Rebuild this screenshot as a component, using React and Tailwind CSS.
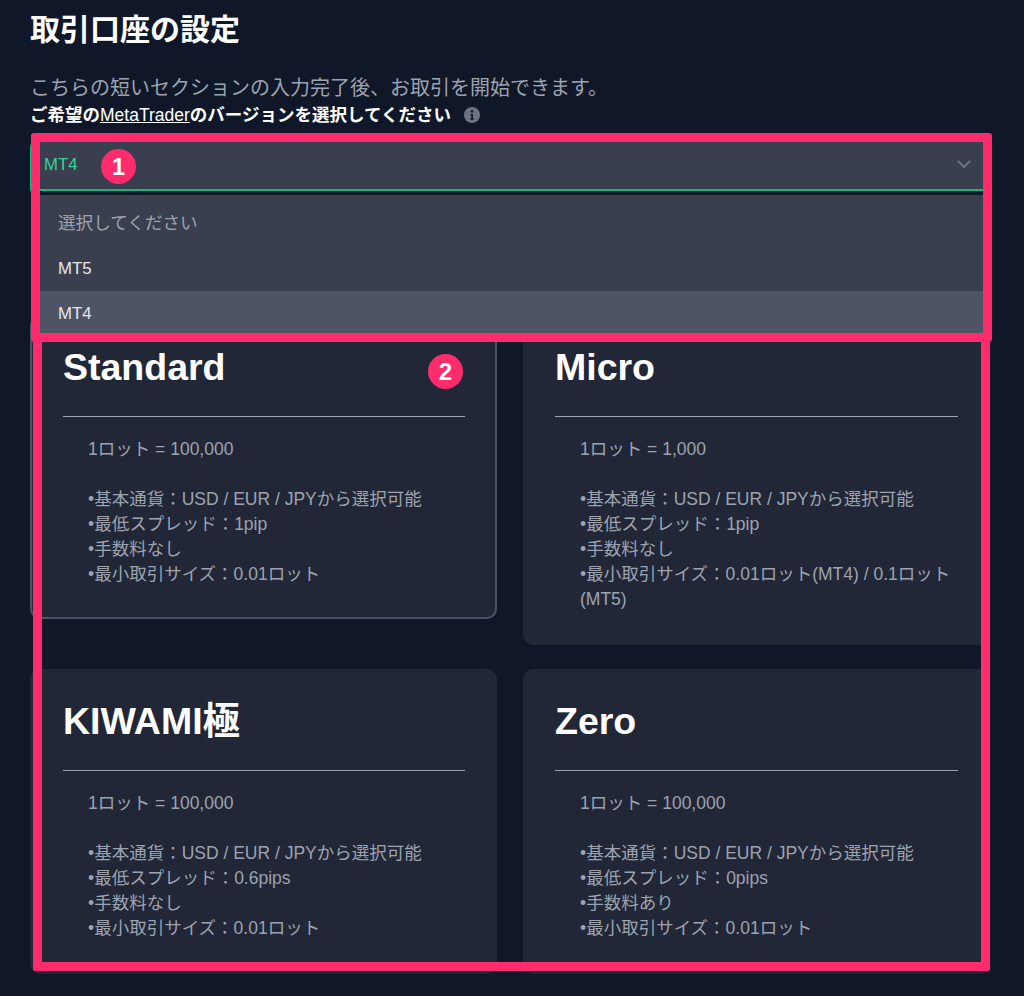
import React from 'react';

const cards = [
  {
    name: 'Standard',
    active: true,
    box: 'border-2 border-[#4b5263] pl-[31px] pr-[30px] pt-[29px] pb-[30px]',
    lines: ['1ロット = 100,000', '', '•基本通貨：USD / EUR / JPYから選択可能', '•最低スプレッド：1pip', '•手数料なし', '•最小取引サイズ：0.01ロット'],
  },
  {
    name: 'Micro',
    box: 'px-[32px] pt-[31px] pb-[33px]',
    lines: ['1ロット = 1,000', '', '•基本通貨：USD / EUR / JPYから選択可能', '•最低スプレッド：1pip', '•手数料なし', '•最小取引サイズ：0.01ロット(MT4) / 0.1ロット(MT5)'],
  },
  {
    name: 'KIWAMI極',
    box: 'pl-[33px] pr-[32px] pt-[31px] pb-[33px]',
    lines: ['1ロット = 100,000', '', '•基本通貨：USD / EUR / JPYから選択可能', '•最低スプレッド：0.6pips', '•手数料なし', '•最小取引サイズ：0.01ロット'],
  },
  {
    name: 'Zero',
    box: 'px-[32px] pt-[31px] pb-[33px]',
    lines: ['1ロット = 100,000', '', '•基本通貨：USD / EUR / JPYから選択可能', '•最低スプレッド：0pips', '•手数料あり', '•最小取引サイズ：0.01ロット'],
  },
];

const Badge = ({ n, className }) => (
  <div className={`absolute w-[35px] h-[35px] rounded-full bg-[#fe2c6d] flex items-center justify-center text-white font-bold text-[24px] leading-none ${className}`}>
    {n}
  </div>
);

const AccountCard = ({ card }) => (
  <div className={`rounded-[10px] bg-[#212737] ${card.box}`}>
    <h2 className="text-[37.5px] leading-[42px] font-bold text-white pb-[28px] border-b border-[#9ca3af]">{card.name}</h2>
    <div className="pt-[20px] pl-[25px] text-[17.5px] leading-[25px] text-[#9ca3af]">
      {card.lines.map((line, i) => (
        <p key={i} className="min-h-[25px]">{line}</p>
      ))}
    </div>
  </div>
);

export default function App() {
  return (
    <div className="relative w-[1024px] h-[996px] overflow-hidden bg-[#101728] font-['Liberation_Sans','Noto_Sans_CJK_JP',sans-serif]">
      <div className="pl-[30px] pr-[34px] pt-[12px]">
        <h1 className="text-[30px] leading-[36px] font-bold text-white">取引口座の設定</h1>
        <p className="mt-[26px] text-[20px] leading-[28px] text-[#9ca3af]">こちらの短いセクションの入力完了後、お取引を開始できます。</p>
        <div className="mt-px flex items-center text-[17.5px] leading-[24px] font-bold text-white">
          <span>ご希望の<span className="underline font-normal">MetaTrader</span>のバージョンを選択してください</span>
          <svg className="ml-[13px] w-[16px] h-[16px]" viewBox="0 0 16 16">
            <circle cx="8" cy="8" r="8" fill="#6b7280" />
            <circle cx="8" cy="4.4" r="1.3" fill="#101728" />
            <path d="M6.4 7h2.5v4.6h1v1.1H6.2v-1.1h1V8.1h-.8z" fill="#101728" />
          </svg>
        </div>

        {/* select, open */}
        <div className="relative mt-[14px] h-[50px] rounded-t-[6px] bg-[#3a3f50] border-l border-b-2 border-[#10b981] flex items-center justify-between pl-[13px] pr-[19px]">
          <span className="text-[16.8px] text-[#34d399]">MT4</span>
          <svg className="w-[14px] h-[14px] -mt-[2px]" viewBox="0 0 14 14" fill="none" stroke="#6b7280" strokeWidth="2" strokeLinecap="round" strokeLinejoin="round">
            <path d="M1.5 4.5 7 10l5.5-5.5" />
          </svg>
          <div className="absolute z-10 top-[54px] left-0 right-0 bg-[#3a3f50] text-[16.8px] text-[#e5e7eb]">
            <div className="h-[51px] pt-[5px] pl-[27px] flex items-center text-[17.6px] text-[#9ca3af]">選択してください</div>
            <div className="h-[45px] pl-[27px] flex items-center">MT5</div>
            <div className="h-[45px] pl-[27px] flex items-center bg-[#4f5464]">MT4</div>
          </div>
        </div>

        <div className="mt-[124px] grid grid-cols-2 gap-x-[26px] gap-y-[24px] items-start">
          {cards.map(card => (
            <AccountCard key={card.name} card={card} />
          ))}
        </div>
      </div>

      {/* annotation overlays */}
      <div className="absolute z-20 left-[33px] top-[342px] w-[957px] h-[629px] border-[9px] border-t-0 border-[#fe2c6d] rounded-b-[3px]" />
      <div className="absolute z-20 left-[31px] top-[133px] w-[961px] h-[209px] border-[9px] border-[#fe2c6d] rounded-[3px]" />
      <Badge n="1" className="z-30 left-[101px] top-[149px]" />
      <Badge n="2" className="z-30 left-[428px] top-[354px]" />
    </div>
  );
}
